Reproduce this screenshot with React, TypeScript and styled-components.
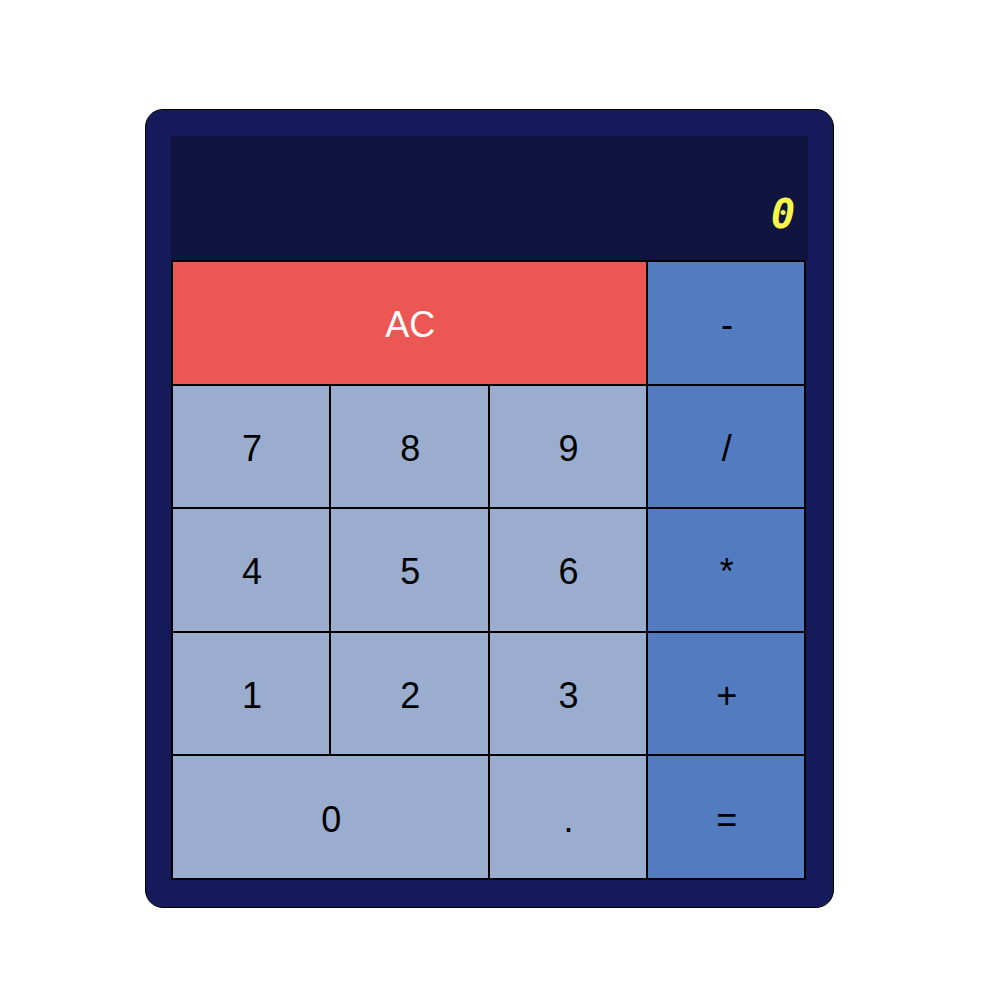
import React, { useState } from "react";
import styled, { createGlobalStyle } from "styled-components";

const GlobalStyle = createGlobalStyle`
  body {
    margin: 0;
    background: #ffffff;
    font-family: "Liberation Sans", Arial, sans-serif;
  }
`;

const Page = styled.div`
  padding: 109px 0 0 145px;
`;

const Calculator = styled.div`
  width: 637px;
  padding: 26px 25px 27px 25px;
  background: #151a5a;
  border: 1px solid #000000;
  border-radius: 18px;
`;

const Display = styled.div`
  height: 124px;
  background: #11143f;
  display: flex;
  align-items: flex-end;
  justify-content: flex-end;
  padding: 0 13px 26px 0;
  box-sizing: border-box;
  font-family: "DejaVu Sans Mono", "Liberation Mono", monospace;
  font-size: 40px;
  font-weight: bold;
  font-style: italic;
  color: #f7f74a;
  line-height: 1;
`;

const Keypad = styled.div`
  box-sizing: border-box;
  width: 635px;
  height: 620px;
  display: grid;
  grid-template-columns: repeat(4, 1fr);
  grid-template-rows: repeat(5, 1fr);
  border: 1px solid #000000;
`;

type Kind = "clear" | "number" | "operator";

const colours: Record<Kind, string> = {
  clear: "#ed5753",
  number: "#9badcf",
  operator: "#537bbf",
};

const Key = styled.button<{ $kind: Kind; $span?: number }>`
  grid-column: span ${p => p.$span || 1};
  border: 1px solid #000000;
  border-radius: 0;
  margin: 0;
  padding: 5px 0 0 2px;
  background: ${p => colours[p.$kind]};
  color: ${p => (p.$kind === "clear" ? "#ffffff" : "#000000")};
  font-family: "Liberation Sans", Arial, sans-serif;
  font-size: 36px;
  cursor: pointer;
`;

const keys: { label: string; kind: Kind; span?: number }[] = [
  { label: "AC", kind: "clear", span: 3 },
  { label: "-", kind: "operator" },
  { label: "7", kind: "number" },
  { label: "8", kind: "number" },
  { label: "9", kind: "number" },
  { label: "/", kind: "operator" },
  { label: "4", kind: "number" },
  { label: "5", kind: "number" },
  { label: "6", kind: "number" },
  { label: "*", kind: "operator" },
  { label: "1", kind: "number" },
  { label: "2", kind: "number" },
  { label: "3", kind: "number" },
  { label: "+", kind: "operator" },
  { label: "0", kind: "number", span: 2 },
  { label: ".", kind: "number" },
  { label: "=", kind: "operator" },
];

const App: React.FunctionComponent = () => {
  const [display] = useState("0");
  return (
    <Page>
      <GlobalStyle />
      <Calculator>
        <Display>{display}</Display>
        <Keypad>
          {keys.map(k => (
            <Key key={k.label} $kind={k.kind} $span={k.span}>
              {k.label}
            </Key>
          ))}
        </Keypad>
      </Calculator>
    </Page>
  );
};

export default App;
